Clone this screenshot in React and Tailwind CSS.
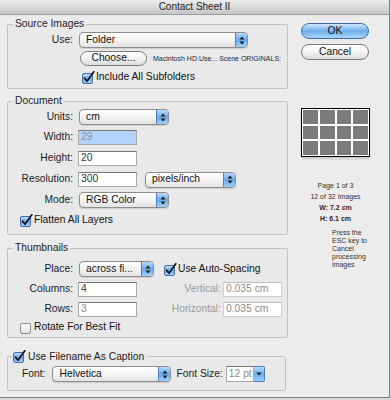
import React from "react";

// little blue up/down stepper at the end of a popup menu
const Stepper = () => (
  <span className="flex w-[12px] self-stretch items-center justify-center rounded-r-[3px] border-l border-[#4f7fbf] bg-gradient-to-b from-[#b9dafa] via-[#6aa8ea] to-[#9fd0fb]">
    <svg width="6" height="9" viewBox="0 0 6 9">
      <path d="M3 0.5 L5.5 3.5 L0.5 3.5 Z" fill="#1b1b1b" />
      <path d="M3 8.5 L5.5 5.5 L0.5 5.5 Z" fill="#1b1b1b" />
    </svg>
  </span>
);

const Select = ({ className, text }) => (
  <div
    className={`flex h-[16px] items-center overflow-hidden rounded-[4px] border border-[#8c8c8c] bg-gradient-to-b from-white via-[#f4f4f4] to-[#e3e3e3] shadow-[0_1px_1px_rgba(0,0,0,0.12)] ${className}`}
  >
    <span className="flex-1 truncate pl-[6px] leading-none text-[#111]">{text}</span>
    <Stepper />
  </div>
);

const Input = ({ className, text, muted }) => (
  <div
    className={`flex h-[15px] items-center overflow-hidden whitespace-nowrap border border-[#a8a8a8] border-t-[#777] px-[2px] leading-none ${
      muted ? "text-[#8d8d8d]" : "text-[#333]"
    } ${className}`}
  >
    {text}
  </div>
);

const CheckBox = ({ checked }) => (
  <svg width="13" height="13" viewBox="0 0 13 13" className="shrink-0">
    <defs>
      <linearGradient id="cbOn" x1="0" y1="0" x2="0" y2="1">
        <stop offset="0" stopColor="#c6e1fb" />
        <stop offset="0.5" stopColor="#6aa7e8" />
        <stop offset="1" stopColor="#a5d1fa" />
      </linearGradient>
      <linearGradient id="cbOff" x1="0" y1="0" x2="0" y2="1">
        <stop offset="0" stopColor="#ffffff" />
        <stop offset="1" stopColor="#e2e2e2" />
      </linearGradient>
    </defs>
    <rect
      x="0.5"
      y="2.5"
      width="10"
      height="10"
      rx="1.5"
      fill={checked ? "url(#cbOn)" : "url(#cbOff)"}
      stroke={checked ? "#466fa6" : "#8a8a8a"}
    />
    {checked && (
      <path d="M2.6 7.2 L5 10.2 L11.8 0.8" fill="none" stroke="#111" strokeWidth="1.7" strokeLinecap="round" />
    )}
  </svg>
);

const Label = ({ children }) => (
  <span className="w-[65px] shrink-0 text-right leading-none text-[#1c1c1c]">{children}</span>
);

const Group = ({ legend, className, children }) => (
  <fieldset className={`rounded-[2px] border border-[#c2c2c2] bg-[#e9e9e9] ${className}`}>
    {legend}
    {children}
  </fieldset>
);

export default function App() {
  return (
    <div className="h-[400px] w-[391px] bg-[#d9d9d9] font-['Liberation_Sans',Arial,sans-serif] text-[10.3px]">
      <div className="h-[398px] w-[390px] border-r border-b border-[#7c7c7c] bg-[#ececec]">
        {/* title bar */}
        <div className="flex h-[15px] items-center justify-center border-b border-[#9c9c9c] bg-gradient-to-b from-[#ececec] to-[#c7c7c7] text-[10px] leading-none text-[#222]">
          Contact Sheet II
        </div>

        <div className="flex">
          {/* left column */}
          <div className="w-[288px] pl-[7px] pt-[3px]">
            <Group
              className="pt-[1px] pb-[2px]"
              legend={<legend className="ml-[5px] px-[2px] leading-[12px] text-[#1c1c1c]">Source Images</legend>}
            >
              <div className="flex h-[18px] items-center">
                <Label>Use:</Label>
                <Select className="ml-[6px] w-[169px]" text="Folder" />
              </div>
              <div className="flex h-[19px] items-center">
                <button className="ml-[72px] flex h-[15px] w-[67px] items-center justify-center rounded-full border border-[#7a7a7a] bg-gradient-to-b from-white via-[#f3f3f3] to-[#dcdcdc] leading-none text-[#111]">
                  Choose...
                </button>
                <span className="ml-[6px] text-[7px] leading-none text-[#1d2740]">
                  Macintosh HD:Use... Scene ORIGINALS:
                </span>
              </div>
              <div className="flex h-[18px] items-center">
                <span className="ml-[74px]" />
                <CheckBox checked />
                <span className="ml-[1px] leading-none text-[#111]">Include All Subfolders</span>
              </div>
            </Group>

            <Group
              className="mt-[6px] pb-[4px]"
              legend={<legend className="ml-[5px] px-[2px] leading-[12px] text-[#1c1c1c]">Document</legend>}
            >
              <div className="flex h-[20px] items-center">
                <Label>Units:</Label>
                <Select className="ml-[6px] w-[90px]" text="cm" />
              </div>
              <div className="flex h-[21px] items-center">
                <Label>Width:</Label>
                <Input className="ml-[5px] w-[59px] bg-[#b3d3fd]" text="29" muted />
              </div>
              <div className="flex h-[21px] items-center">
                <Label>Height:</Label>
                <Input className="ml-[5px] w-[59px] bg-white" text="20" />
              </div>
              <div className="flex h-[21px] items-center">
                <Label>Resolution:</Label>
                <Input className="ml-[5px] w-[59px] bg-white" text="300" />
                <Select className="ml-[8px] w-[91px]" text="pixels/inch" />
              </div>
              <div className="flex h-[20px] items-center">
                <Label>Mode:</Label>
                <Select className="ml-[6px] w-[90px]" text="RGB Color" />
              </div>
              <div className="flex h-[20px] items-center">
                <span className="ml-[12px]" />
                <CheckBox checked />
                <span className="ml-[1px] leading-none text-[#111]">Flatten All Layers</span>
              </div>
            </Group>

            <Group
              className="mt-[7px] pt-[5px] pb-[2px]"
              legend={<legend className="ml-[5px] px-[2px] leading-[12px] text-[#1c1c1c]">Thumbnails</legend>}
            >
              <div className="flex h-[20px] items-center">
                <Label>Place:</Label>
                <Select className="ml-[6px] w-[75px]" text="across fi..." />
                <span className="ml-[10px]" />
                <CheckBox checked />
                <span className="ml-[1px] leading-none text-[#111]">Use Auto-Spacing</span>
              </div>
              <div className="flex h-[20px] items-center">
                <Label>Columns:</Label>
                <Input className="ml-[5px] w-[59px] bg-white" text="4" />
                <span className="w-[84px] text-right leading-none text-[#9a9a9a]">Vertical:</span>
                <Input className="ml-[2px] w-[59px] border-[#cfcfcf] border-t-[#bdbdbd] bg-white" text="0.035 cm" muted />
              </div>
              <div className="flex h-[20px] items-center">
                <Label>Rows:</Label>
                <Input className="ml-[5px] w-[59px] bg-white" text="3" muted />
                <span className="w-[84px] text-right leading-none text-[#9a9a9a]">Horizontal:</span>
                <Input className="ml-[2px] w-[59px] border-[#cfcfcf] border-t-[#bdbdbd] bg-white" text="0.035 cm" muted />
              </div>
              <div className="flex h-[16px] items-center">
                <span className="ml-[12px]" />
                <CheckBox />
                <span className="ml-[1px] leading-none text-[#111]">Rotate For Best Fit</span>
              </div>
            </Group>

            <Group
              className="mt-[12px] w-[279px] pt-[1px] pb-[6px]"
              legend={
                <legend className="ml-[4px] flex items-center px-[1px] leading-[12px] text-[#1c1c1c]">
                  <CheckBox checked />
                  <span className="ml-[2px] pr-[2px]">Use Filename As Caption</span>
                </legend>
              }
            >
              <div className="flex h-[20px] items-center">
                <span className="ml-[14px] leading-none text-[#1c1c1c]">Font:</span>
                <Select className="ml-[7px] w-[119px]" text="Helvetica" />
                <span className="ml-[5px] leading-none text-[#1c1c1c]">Font Size:</span>
                <div className="ml-[3px] flex h-[16px]">
                  <Input className="h-[16px] w-[28px] bg-white px-[1px]" text="12 pt" muted />
                  <span className="flex w-[11px] items-center justify-center rounded-r-[2px] border border-l-0 border-[#4f7fbf] bg-gradient-to-b from-[#b9dafa] via-[#6aa8ea] to-[#9fd0fb]">
                    <svg width="6" height="4" viewBox="0 0 6 4">
                      <path d="M0.5 0.5 L5.5 0.5 L3 3.5 Z" fill="#1b1b1b" />
                    </svg>
                  </span>
                </div>
              </div>
            </Group>
          </div>

          {/* right column */}
          <div className="ml-[13px] w-[69px]">
            <button className="mt-[8px] flex h-[16px] w-[68px] items-center justify-center rounded-full border border-[#3f6ea9] bg-gradient-to-b from-[#cfe6fb] via-[#6eaeed] to-[#a9d6fb] leading-none text-[#111]">
              OK
            </button>
            <button className="mt-[5px] flex h-[16px] w-[68px] items-center justify-center rounded-full border border-[#7a7a7a] bg-gradient-to-b from-white via-[#f3f3f3] to-[#dcdcdc] leading-none text-[#111]">
              Cancel
            </button>

            <div className="mt-[48px] grid h-[49px] w-[69px] grid-cols-4 gap-[2px] border border-black bg-white p-[1px] shadow-[0_2px_2px_rgba(0,0,0,0.15)]">
              {Array.from({ length: 12 }).map((_, i) => (
                <div key={i} className="bg-[#7b7b7b]" />
              ))}
            </div>

            <div className="mt-[23px] text-center text-[7px] leading-[11px] text-[#333]">
              <div>Page 1 of 3</div>
              <div>12 of 32 Images</div>
              <div className="font-bold text-[#3a1d1d]">W: 7.2 cm</div>
              <div className="font-bold text-[#3a1d1d]">H: 6.1 cm</div>
            </div>

            <div className="mt-[5px] pl-[31px] text-[7px] leading-[8px] text-[#333]">
              <div>Press the</div>
              <div>ESC key to</div>
              <div>Cancel</div>
              <div>processing</div>
              <div>images</div>
            </div>
          </div>
        </div>
      </div>
    </div>
  );
}
